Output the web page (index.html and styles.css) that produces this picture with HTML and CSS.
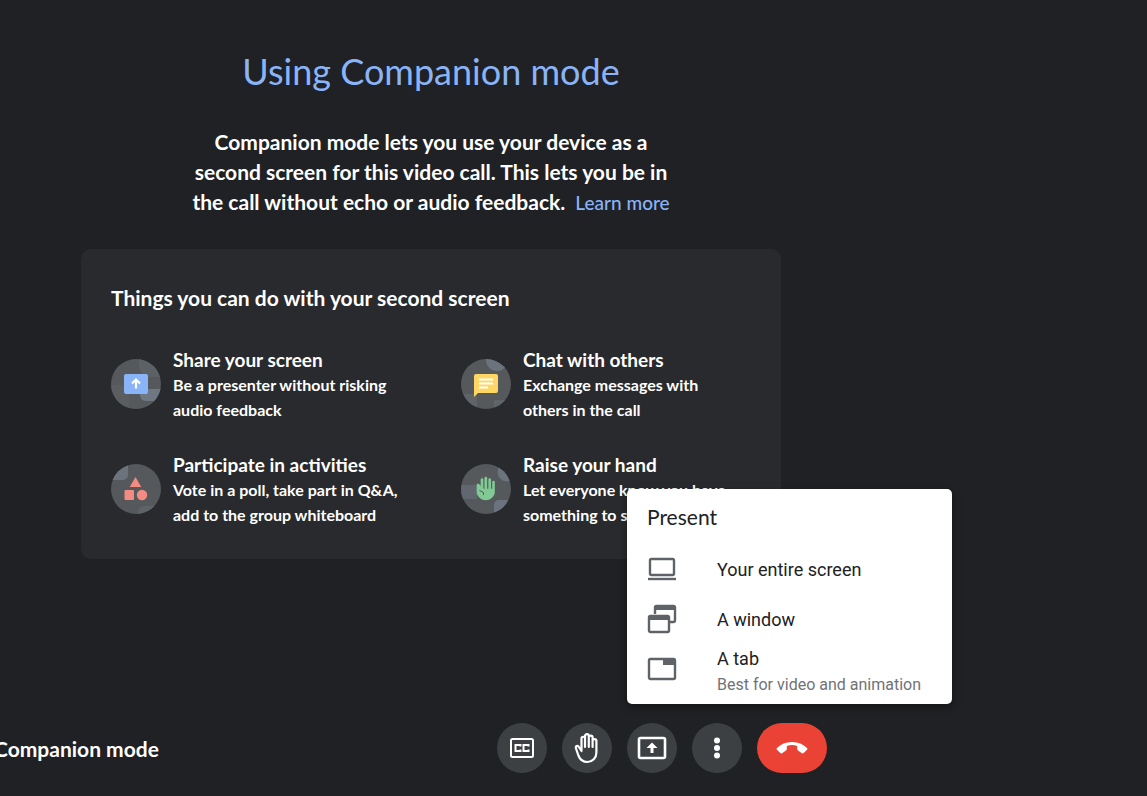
FILE: index.html
```html
<!DOCTYPE html>
<html lang="en">
<head>
    <meta charset="UTF-8">
    <meta name="viewport" content="width=device-width, initial-scale=1.0">
    <title>Companion mode</title>
    <link rel="stylesheet" href="styles.css">
</head>
<body>
    <main class="stage">
        <h1>Using Companion mode</h1>
        <p class="intro">
            Companion mode lets you use your device as a<br>
            second screen for this video call. This lets you be in<br>
            the call without echo or audio feedback. <a href="#" class="learn-more">Learn more</a>
        </p>

        <section class="card">
            <h2>Things you can do with your second screen</h2>
            <div class="features">
                <div class="feature">
                    <svg class="feature-icon" viewBox="0 0 50 50" aria-hidden="true">
                        <clipPath id="disc"><circle cx="25" cy="25" r="25"/></clipPath>
                        <g clip-path="url(#disc)">
                            <rect width="50" height="50" fill="#55595c"/>
                            <path d="M28 0h22v18h-10a12 12 0 0 1-12-12z" fill="#5c6165"/>
                            <path d="M0 26h18v24H0z" fill="#5a5e61"/>
                            <path d="M29 30h21v12H35a6 6 0 0 1-6-6z" fill="#6f7882"/>
                        </g>
                        <rect x="13" y="15" width="24" height="20" rx="2" fill="#8ab4f8"/>
                        <path d="M25 29.500v-7M21 24.500l4-4 4 4" fill="none" stroke="#fff" stroke-width="2.200"/>
                    </svg>
                    <div>
                        <h3>Share your screen</h3>
                        <p>Be a presenter without risking<br>audio feedback</p>
                    </div>
                </div>
                <div class="feature">
                    <svg class="feature-icon" viewBox="0 0 50 50" aria-hidden="true">
                        <g clip-path="url(#disc)">
                            <rect width="50" height="50" fill="#55595c"/>
                            <circle cx="36" cy="1" r="11" fill="#6b737d"/>
                            <path d="M0 35h16v15H0zM33 41h17v9H33z" fill="#5f6468"/>
                        </g>
                        <path d="M15 15h20a2 2 0 0 1 2 2v15a2 2 0 0 1-2 2H17l-4 4V17a2 2 0 0 1 2-2z" fill="#fdd663"/>
                        <path d="M18 20.500h14M18 24.500h14M18 28.500h9" stroke="#fff" stroke-width="1.800"/>
                    </svg>
                    <div>
                        <h3>Chat with others</h3>
                        <p>Exchange messages with<br>others in the call</p>
                    </div>
                </div>
                <div class="feature">
                    <svg class="feature-icon" viewBox="0 0 50 50" aria-hidden="true">
                        <g clip-path="url(#disc)">
                            <rect width="50" height="50" fill="#55595c"/>
                            <path d="M0 0h17v11a5 5 0 0 1-5 5H0z" fill="#6b747d"/>
                            <path d="M27 50v-2a6 6 0 0 1 6-6h17v8z" fill="#5e6368"/>
                        </g>
                        <path d="M24.500 13l5.800 10h-11.600z" fill="#f28b82"/>
                        <rect x="13.500" y="26" width="9.500" height="10" rx="1" fill="#f28b82"/>
                        <circle cx="31" cy="31" r="5.200" fill="#f28b82"/>
                    </svg>
                    <div>
                        <h3>Participate in activities</h3>
                        <p>Vote in a poll, take part in Q&amp;A,<br>add to the group whiteboard</p>
                    </div>
                </div>
                <div class="feature">
                    <svg class="feature-icon" viewBox="0 0 50 50" aria-hidden="true">
                        <g clip-path="url(#disc)">
                            <rect width="50" height="50" fill="#55595c"/>
                            <path d="M0 21h16v14H0z" fill="#60676f"/>
                            <circle cx="46" cy="8" r="9.500" fill="#6b747e"/>
                            <path d="M33 50v-9a5 5 0 0 1 5-5h12v14z" fill="#6b747e"/>
                        </g>
                        <path d="M17 21v8a8 8 0 0 0 15.500 0V18V26H22z" fill="#81c995" stroke="#81c995" stroke-width="2.600" stroke-linecap="round" stroke-linejoin="round"/>
                        <path d="M21 27V15.500M24.800 27V14M28.700 27V15.500" stroke="#81c995" stroke-width="2.700" stroke-linecap="round"/>
                        <path d="M18.500 26.500l4 2v2.500" stroke="#55595c" stroke-width="1" fill="none"/>
                    </svg>
                    <div>
                        <h3>Raise your hand</h3>
                        <p>Let everyone know you have<br>something to say</p>
                    </div>
                </div>
            </div>
        </section>
    </main>

    <footer class="call-bar">
        <span class="call-name">Companion mode</span>
        <div class="controls">
            <button type="button" class="control" aria-label="Turn on captions">
                <svg width="24" height="20" viewBox="0 0 24 20" fill="none" stroke="#fff" aria-hidden="true">
                    <rect x="1" y="1" width="22" height="18" rx="1.500" stroke-width="2"/>
                    <path d="M10.500 8.500V7H5.500v6h5v-1.500M18.500 8.500V7h-5v6h5v-1.500" stroke-width="2"/>
                </svg>
            </button>
            <button type="button" class="control" aria-label="Raise hand">
                <svg width="26" height="32" viewBox="0 0 26 32" fill="none" stroke="#fff" stroke-width="2.200" stroke-linejoin="round" stroke-linecap="round" aria-hidden="true">
                    <path d="M7.500 19V6.500a1.750 1.750 0 0 1 3.500 0V15M11 14V4a1.900 1.900 0 0 1 3.800 0v11M14.800 5.500a1.900 1.900 0 0 1 3.800 0V15M18.600 9a1.900 1.900 0 0 1 3.800 0V20.500c0 5.500-4 9.500-9 9.500-4.500 0-7.500-2.500-9-6.500L2 16.500c-.8-2.500 1.800-3.500 2.900-1.500L7.500 19"/>
                </svg>
            </button>
            <div class="present">
                <button type="button" class="control" aria-label="Present now" aria-haspopup="menu" aria-expanded="true">
                    <svg width="30" height="24" viewBox="0 0 30 24" fill="none" stroke="#fff" aria-hidden="true">
                        <rect x="2" y="2" width="26" height="20" rx="1.500" stroke-width="2.600"/>
                        <path d="M15 17V9" stroke-width="3"/>
                        <path d="M15 6.500l5.500 5.500h-11z" fill="#fff" stroke="none"/>
                    </svg>
                </button>
                <div class="menu" role="menu" aria-label="Present">
                    <h2>Present</h2>
                    <button type="button" class="menu-item" role="menuitem">
                        <svg width="30" height="30" viewBox="0 0 30 30" fill="none" stroke="#5f6368" stroke-width="2.400" aria-hidden="true">
                            <rect x="3" y="5" width="24" height="16" rx="1.500"/>
                            <path d="M1 25h28"/>
                        </svg>
                        <span class="menu-text">Your entire screen</span>
                    </button>
                    <button type="button" class="menu-item" role="menuitem">
                        <svg width="30" height="30" viewBox="0 0 30 30" fill="none" stroke="#5f6368" stroke-width="2.400" aria-hidden="true">
                            <path d="M8 10V3.500A1.500 1.500 0 0 1 9.500 2h17A1.500 1.500 0 0 1 28 3.500v13a1.500 1.500 0 0 1-1.500 1.500H22"/>
                            <path d="M8 4h20" stroke-width="4"/>
                            <rect x="2" y="12" width="20" height="16" rx="1.500"/>
                            <path d="M2 14h20" stroke-width="4"/>
                        </svg>
                        <span class="menu-text">A window</span>
                    </button>
                    <button type="button" class="menu-item" role="menuitem">
                        <svg width="30" height="30" viewBox="0 0 30 30" fill="none" stroke="#5f6368" stroke-width="2.400" aria-hidden="true">
                            <rect x="2" y="5" width="26" height="20" rx="1.500"/>
                            <path d="M16 5h12v6H16z" fill="#5f6368" stroke="none"/>
                        </svg>
                        <span class="menu-text two-line">A tab <small>Best for video and animation</small></span>
                    </button>
                </div>
            </div>
            <button type="button" class="control" aria-label="More options">
                <svg width="8" height="22" viewBox="0 0 8 22" fill="#fff" aria-hidden="true">
                    <circle cx="4" cy="3.500" r="3"/>
                    <circle cx="4" cy="11" r="3"/>
                    <circle cx="4" cy="18.500" r="3"/>
                </svg>
            </button>
            <button type="button" class="control hang-up" aria-label="Leave call">
                <svg width="32" height="14" viewBox="0 0 32 14" fill="#fff" aria-hidden="true">
                    <path d="M16 1C10 1 4.800 3.200 1 6.900c-.6.600-.6 1.200 0 1.800l3.300 3.400c.6.500 1.200.5 1.800.1l3.900-2.700c.5-.4.8-.9.800-1.500V4.900a17 17 0 0 1 10.400 0V8c0 .6.300 1.100.8 1.500l3.900 2.700c.6.400 1.200.4 1.800-.1L31 8.700c.6-.6.6-1.200 0-1.800C27.200 3.200 22 1 16 1z"/>
                </svg>
            </button>
        </div>
    </footer>
</body>
</html>
```

FILE: styles.css
```css
* {
    box-sizing: border-box;
}
body {
    margin: 0;
    min-height: 100vh;
    display: flex;
    flex-direction: column;
    overflow-x: hidden;
    background-color: #202124;
    color: #fff;
    font-family: Lato, sans-serif;
}
h1, h2, h3, p {
    margin: 0;
}

/* Main content */
.stage {
    flex: 1;
    display: flex;
    flex-direction: column;
    align-items: center;
    padding: 46px 285px 0 0;
}
h1 {
    color: #8ab4f8;
    font-size: 36px;
    font-weight: 400;
    line-height: 50px;
}
.intro {
    margin-top: 31px;
    font-size: 21px;
    font-weight: 700;
    line-height: 30px;
    text-align: center;
}
.learn-more {
    margin-left: 5px;
    color: #8ab4f8;
    font-size: 19px;
    font-weight: 500;
    text-decoration: none;
}

/* Feature card */
.card {
    width: 100%;
    max-width: 700px;
    margin-top: 31px;
    padding: 30px 30px 32px;
    border-radius: 10px;
    background-color: #292a2d;
}
.card h2 {
    font-size: 21px;
    font-weight: 700;
    line-height: 38px;
}
.features {
    display: grid;
    grid-template-columns: 1fr 1fr;
    gap: 30px 60px;
    margin-top: 30px;
}
.feature {
    display: flex;
    gap: 12px;
    font-size: 16px;
    font-weight: 700;
    line-height: 25px;
    white-space: nowrap;
}
.feature h3 {
    font-size: 19px;
    font-weight: 700;
}
.feature-icon {
    flex: none;
    width: 50px;
    height: 50px;
    margin-top: 12px;
}

/* Call bar */
.call-bar {
    display: flex;
    align-items: center;
    justify-content: space-between;
    padding: 0 320px 23px 0;
}
.call-name {
    margin-left: -6px;
    font-size: 21px;
    font-weight: 700;
    white-space: nowrap;
}
.controls {
    display: flex;
    gap: 15px;
}
.control {
    display: flex;
    align-items: center;
    justify-content: center;
    width: 50px;
    height: 50px;
    padding: 0;
    border: none;
    border-radius: 25px;
    background-color: #3c4043;
    cursor: pointer;
}
.control:hover {
    background-color: #4a4e51;
}
.hang-up {
    width: 70px;
    background-color: #ea4335;
}
.hang-up:hover {
    background-color: #f05a4d;
}

/* Present menu */
.present {
    position: relative;
}
.menu {
    position: absolute;
    left: 0;
    bottom: 69px;
    width: 325px;
    padding: 3px 0 10px;
    border-radius: 5px;
    background-color: #fff;
    box-shadow: 0 3px 8px rgba(0, 0, 0, 0.4);
    color: #202124;
}
.menu h2 {
    padding: 0 20px 2px;
    font-size: 21px;
    font-weight: 400;
    line-height: 50px;
}
.menu-item {
    display: flex;
    align-items: center;
    gap: 40px;
    width: 100%;
    height: 50px;
    padding: 0 20px;
    border: none;
    background: none;
    color: #202124;
    font-family: Roboto, sans-serif;
    font-size: 18px;
    line-height: 26px;
    text-align: left;
    cursor: pointer;
}
.menu-item:hover {
    background-color: #f1f3f4;
}
.menu-text {
    padding-top: 2px;
}
.menu-text.two-line {
    padding-top: 6px;
}
.menu-item small {
    display: block;
    color: #6f7377;
    font-size: 16px;
}
```
